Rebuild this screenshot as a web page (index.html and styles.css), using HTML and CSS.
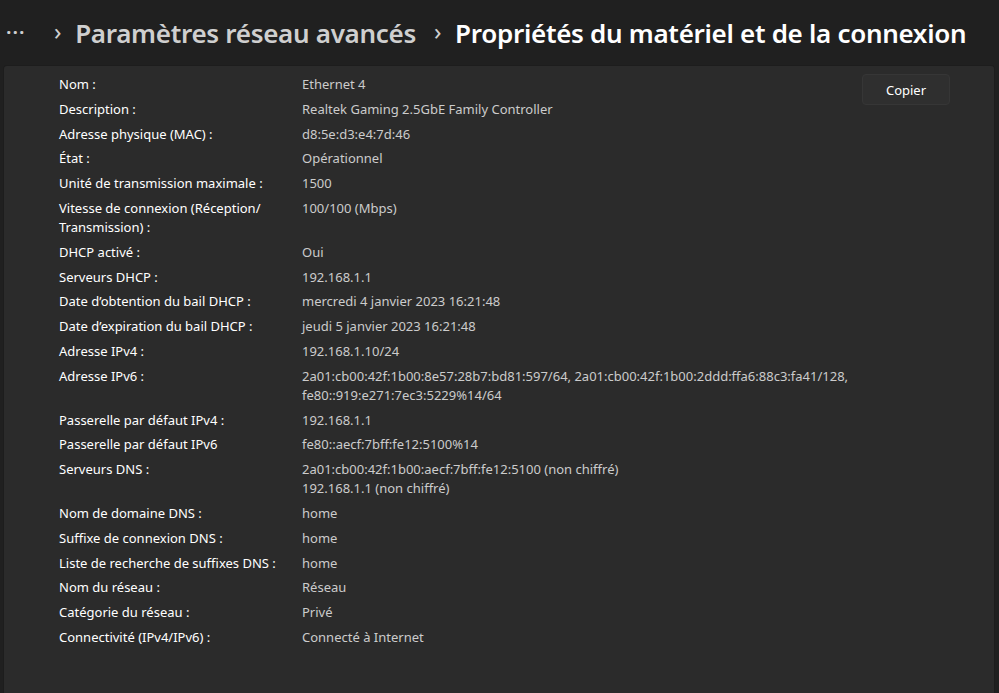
FILE: index.html
```html
<!DOCTYPE html>
<html lang="fr">
<head>
<meta charset="utf-8">
<link rel="stylesheet" href="styles.css">
</head>
<body>
<header class="crumbs">
  <span class="more">···</span>
  <span class="chev">›</span>
  <span class="crumb">Paramètres réseau avancés</span>
  <span class="chev">›</span>
  <span class="crumb current">Propriétés du matériel et de la connexion</span>
</header>
<main class="card">
  <dl class="props">
    <div class="row"><dt>Nom :</dt><dd>Ethernet 4</dd></div>
    <div class="row"><dt>Description :</dt><dd>Realtek Gaming 2.5GbE Family Controller</dd></div>
    <div class="row"><dt>Adresse physique (MAC) :</dt><dd>d8:5e:d3:e4:7d:46</dd></div>
    <div class="row"><dt>État :</dt><dd>Opérationnel</dd></div>
    <div class="row"><dt>Unité de transmission maximale :</dt><dd>1500</dd></div>
    <div class="row"><dt>Vitesse de connexion (Réception/ Transmission) :</dt><dd>100/100 (Mbps)</dd></div>
    <div class="row"><dt>DHCP activé :</dt><dd>Oui</dd></div>
    <div class="row"><dt>Serveurs DHCP :</dt><dd>192.168.1.1</dd></div>
    <div class="row"><dt>Date d’obtention du bail DHCP :</dt><dd>mercredi 4 janvier 2023 16:21:48</dd></div>
    <div class="row"><dt>Date d’expiration du bail DHCP :</dt><dd>jeudi 5 janvier 2023 16:21:48</dd></div>
    <div class="row"><dt>Adresse IPv4 :</dt><dd>192.168.1.10/24</dd></div>
    <div class="row"><dt>Adresse IPv6 :</dt><dd>2a01:cb00:42f:1b00:8e57:28b7:bd81:597/64, 2a01:cb00:42f:1b00:2ddd:ffa6:88c3:fa41/128,<br>fe80::919:e271:7ec3:5229%14/64</dd></div>
    <div class="row"><dt>Passerelle par défaut IPv4 :</dt><dd>192.168.1.1</dd></div>
    <div class="row"><dt>Passerelle par défaut IPv6</dt><dd>fe80::aecf:7bff:fe12:5100%14</dd></div>
    <div class="row"><dt>Serveurs DNS :</dt><dd>2a01:cb00:42f:1b00:aecf:7bff:fe12:5100 (non chiffré)<br>192.168.1.1 (non chiffré)</dd></div>
    <div class="row"><dt>Nom de domaine DNS :</dt><dd>home</dd></div>
    <div class="row"><dt>Suffixe de connexion DNS :</dt><dd>home</dd></div>
    <div class="row"><dt>Liste de recherche de suffixes DNS :</dt><dd>home</dd></div>
    <div class="row"><dt>Nom du réseau :</dt><dd>Réseau</dd></div>
    <div class="row"><dt>Catégorie du réseau :</dt><dd>Privé</dd></div>
    <div class="row"><dt>Connectivité (IPv4/IPv6) :</dt><dd>Connecté à Internet</dd></div>
  </dl>
  <button class="copy">Copier</button>
</main>
</body>
</html>
```
FILE: styles.css
```css
* { box-sizing: border-box; }
html, body { margin: 0; height: 100%; }
body {
  background: #202020;
  font-family: "Noto Sans", "Open Sans", sans-serif;
  color: #ffffff;
  display: flex;
  flex-direction: column;
  overflow: hidden;
}
.crumbs {
  height: 65px;
  display: flex;
  align-items: center;
  padding: 0 0 0 6px;
  white-space: nowrap;
  font-weight: 600;
  font-size: 26px;
  letter-spacing: -0.3px;
}
.more { color: #cfcfcf; font-size: 20px; width: 48px; letter-spacing: 1px; }
.chev { color: #cfcfcf; font-size: 24px; font-weight: 400; margin-right: 14px; position: relative; top: -2px; }
.crumb { color: #cfcfcf; margin-right: 18px; }
.crumb.current { color: #ffffff; }
.card {
  flex: 1;
  margin: 0 4px 0 3px;
  background: #2b2b2b;
  border: 1px solid #1d1d1d;
  border-bottom: none;
  border-radius: 4px 4px 0 0;
  display: flex;
  align-items: flex-start;
  padding: 9px 44px 0 55px;
}
.props { margin: 0; flex: 1; display: flex; flex-direction: column; gap: 5.8px; font-size: 13px; line-height: 19px; }
.row { display: grid; grid-template-columns: 243px 1fr; }
dt { color: #ffffff; padding-right: 10px; }
dd { margin: 0; color: #cccccc; }
.copy {
  margin-top: -1px;
  width: 88px;
  height: 31px;
  background: #2f2f2f;
  border: 1px solid #363636;
  border-radius: 4px;
  color: #ffffff;
  font-family: inherit;
  font-size: 13px;
}
```
